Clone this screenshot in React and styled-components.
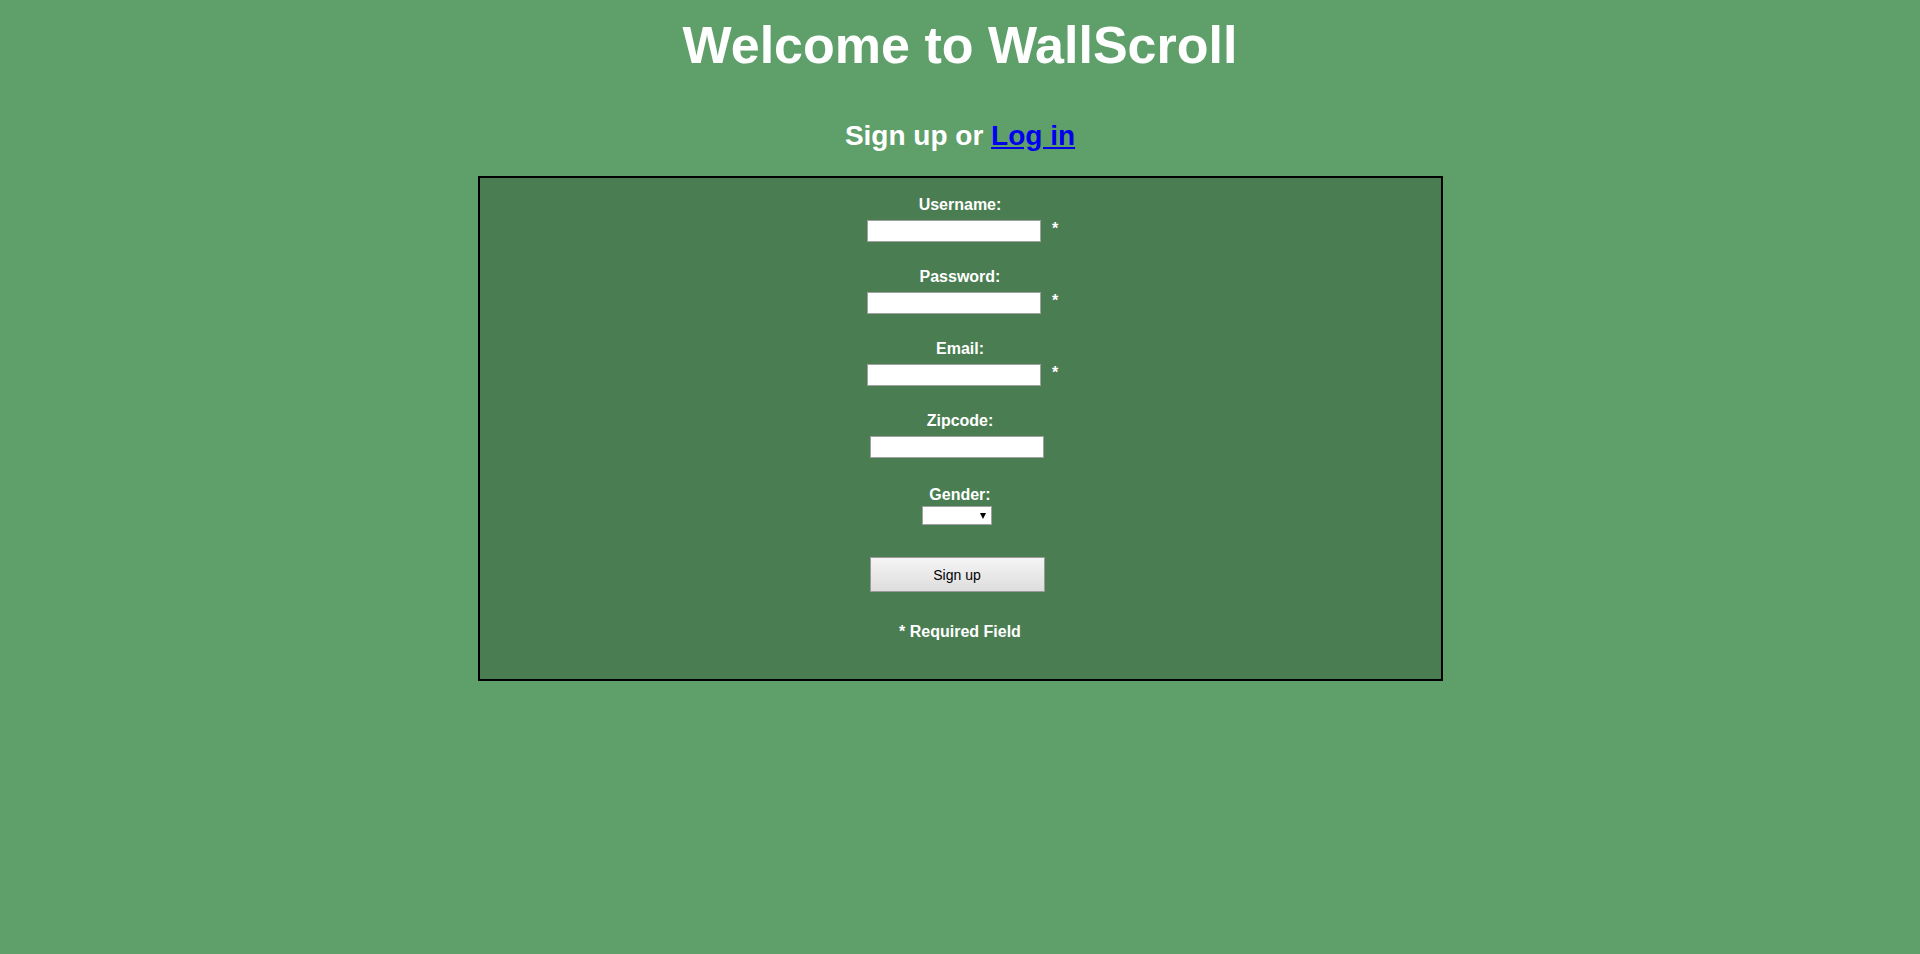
import React from 'react';
import styled, { createGlobalStyle } from 'styled-components';

const GlobalStyle = createGlobalStyle`
  html, body {
    margin: 0;
    padding: 0;
    background-color: #5f9f6a;
    font-family: "Liberation Sans", Arial, sans-serif;
  }
`;

const Page = styled.div`
  display: flex;
  flex-direction: column;
  align-items: center;
  min-height: 954px;
  color: #fff;
`;

const Title = styled.h1`
  margin: 15px 0 0;
  font-size: 52px;
  line-height: 60px;
  font-weight: bold;
`;

const Subtitle = styled.h2`
  margin: 45px 0 0;
  font-size: 28px;
  line-height: 32px;
  font-weight: bold;

  a {
    color: #0000ee;
    text-decoration: underline;
  }
`;

const FormBox = styled.form`
  box-sizing: border-box;
  width: 965px;
  margin-top: 24px;
  padding: 18px 0 38px;
  border: 2px solid #000;
  background-color: #4a7d52;
  display: flex;
  flex-direction: column;
  align-items: center;
`;

const Field = styled.div`
  display: flex;
  flex-direction: column;
  align-items: center;
  margin-bottom: ${(p) => p.$after || 26}px;
`;

const Label = styled.label`
  font-size: 16px;
  line-height: 18px;
  font-weight: bold;
  margin-bottom: ${(p) => p.$gap || 6}px;
`;

const InputRow = styled.div`
  display: flex;
  align-items: center;
  padding-left: ${(p) => (p.$required ? 5 : 0)}px;
  padding-right: ${(p) => (p.$required ? 0 : 6)}px;
`;

const TextInput = styled.input`
  box-sizing: border-box;
  width: 174px;
  height: 22px;
  border: 1px solid #a0a0a0;
  background: #fff;
  padding: 1px 3px;
  font-family: "Liberation Sans", Arial, sans-serif;
  font-size: 13px;
`;

const Star = styled.span`
  margin-left: 11px;
  margin-bottom: 4px;
  font-size: 16px;
  font-weight: bold;
`;

const SelectWrap = styled.div`
  position: relative;
  margin-right: 6px;

  &::after {
    content: '';
    position: absolute;
    right: 6px;
    top: 7px;
    border-left: 3px solid transparent;
    border-right: 3px solid transparent;
    border-top: 6px solid #000;
    pointer-events: none;
  }
`;

const Select = styled.select`
  box-sizing: border-box;
  width: 70px;
  height: 19px;
  appearance: none;
  border: 1px solid #a0a0a0;
  border-radius: 0;
  background: #fff;
  font-size: 13px;
`;

const SubmitButton = styled.button`
  box-sizing: border-box;
  width: 175px;
  height: 35px;
  margin-right: 6px;
  border: 1px solid #9a9a9a;
  border-radius: 0;
  background: linear-gradient(#f5f5f5, #dddddd);
  color: #000;
  font-family: "Liberation Sans", Arial, sans-serif;
  font-size: 14px;
`;

const Note = styled.p`
  margin: 31px 0 0;
  font-size: 16px;
  line-height: 18px;
  font-weight: bold;
`;

const fields = [
  { id: 'username', label: 'Username:', type: 'text', required: true },
  { id: 'password', label: 'Password:', type: 'password', required: true },
  { id: 'email', label: 'Email:', type: 'text', required: true },
  { id: 'zipcode', label: 'Zipcode:', type: 'text', required: false },
];

const App = () => (
  <>
    <GlobalStyle />
    <Page>
      <Title>Welcome to WallScroll</Title>
      <Subtitle>
        Sign up or <a href="#login">Log in</a>
      </Subtitle>
      <FormBox onSubmit={(e) => e.preventDefault()}>
        {fields.map((f) => (
          <Field key={f.id} $after={f.id === 'zipcode' ? 28 : 26}>
            <Label htmlFor={f.id}>{f.label}</Label>
            <InputRow $required={f.required}>
              <TextInput id={f.id} type={f.type} />
              {f.required && <Star>*</Star>}
            </InputRow>
          </Field>
        ))}
        <Field $after={32}>
          <Label htmlFor="gender" $gap={2}>Gender:</Label>
          <SelectWrap>
            <Select id="gender" defaultValue="">
              <option value=""></option>
              <option value="m">Male</option>
              <option value="f">Female</option>
            </Select>
          </SelectWrap>
        </Field>
        <SubmitButton type="submit">Sign up</SubmitButton>
        <Note>* Required Field</Note>
      </FormBox>
    </Page>
  </>
);

export default App;
